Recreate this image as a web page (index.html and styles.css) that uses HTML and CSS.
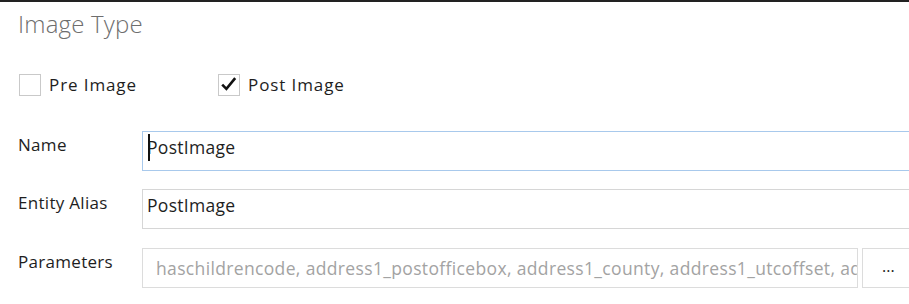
FILE: index.html
```html
<!DOCTYPE html>
<html>
<head>
<meta charset="utf-8">
<link rel="stylesheet" href="styles.css">
</head>
<body>
<div class="panel">
  <h1 class="title">Image Type</h1>
  <div class="checks">
    <label class="check pre"><span class="box"></span><span class="check-text">Pre Image</span></label>
    <label class="check post"><span class="box"><svg viewBox="0 0 20 20" width="20" height="20"><path d="M3.2 9.6 L7.4 13.8 L16.2 3.2" fill="none" stroke="#111" stroke-width="2.6" stroke-linejoin="miter"/></svg></span><span class="check-text">Post Image</span></label>
  </div>
  <div class="row first">
    <div class="label">Name</div>
    <div class="field focus"><span class="caret"></span>PostImage</div>
  </div>
  <div class="row">
    <div class="label">Entity Alias</div>
    <div class="field">PostImage</div>
  </div>
  <div class="row last">
    <div class="label">Parameters</div>
    <div class="field disabled">haschildrencode, address1_postofficebox, address1_county, address1_utcoffset, address1_latitude</div>
    <div class="btn">...</div>
  </div>
</div>
</body>
</html>
```
FILE: styles.css
```css
html, body {
  margin: 0;
  padding: 0;
  background: #fff;
  overflow: hidden;
}
body {
  font-family: "Open Sans", "Noto Sans", sans-serif;
  color: #222;
  border-top: 2px solid #222;
  width: 909px;
  height: 302px;
}
.panel {
  padding: 0 0 0 18px;
}
.title {
  margin: 0;
  padding-top: 6px;
  font-size: 24px;
  font-weight: 300;
  letter-spacing: 0.2px;
  color: #6e6e6e;
  line-height: 32px;
  height: 32px;
}
.checks {
  display: flex;
  margin-top: 34px;
  height: 22px;
  align-items: center;
  padding-left: 1px;
}
.check {
  display: flex;
  align-items: center;
}
.pre { width: 199px; }
.box {
  width: 20px;
  height: 20px;
  border: 1px solid #c9c9c9;
  display: flex;
  align-items: center;
  justify-content: center;
}
.box svg { display: block; }
.check-text {
  margin-left: 8px;
  font-size: 17px;
  letter-spacing: 0.9px;
  line-height: 22px;
  color: #1e1e1e;
}
.row {
  display: flex;
  align-items: flex-start;
  height: 40px;
  margin-top: 18px;
}
.row.first { margin-top: 35px; }
.row.last { margin-top: 19px; }
.label {
  width: 124px;
  flex: none;
  font-size: 17px;
  letter-spacing: 0.3px;
  line-height: 24px;
  padding-top: 2px;
  color: #1e1e1e;
}
.field {
  position: relative;
  flex: none;
  width: 800px;
  height: 40px;
  box-sizing: border-box;
  border: 1px solid #d6d6d6;
  padding: 3px 4px 0;
  font-size: 17.5px;
  letter-spacing: 0.3px;
  line-height: 24px;
  white-space: nowrap;
  overflow: hidden;
  color: #1e1e1e;
}
.focus { border-color: #a8c9ec; }
.caret {
  position: absolute;
  left: 5px;
  top: 2px;
  width: 1.5px;
  height: 27px;
  background: #111;
}
.disabled {
  width: 716px;
  color: #a3a3a3;
  border-color: #dcdcdc;
  padding: 7px 13px 0 13px;
  letter-spacing: 0.35px;
}
.btn {
  flex: none;
  margin-left: 4px;
  width: 60px;
  height: 40px;
  box-sizing: border-box;
  border: 1px solid #dcdcdc;
  font-size: 16px;
  line-height: 34px;
  padding-left: 19px;
  color: #222;
}
```
